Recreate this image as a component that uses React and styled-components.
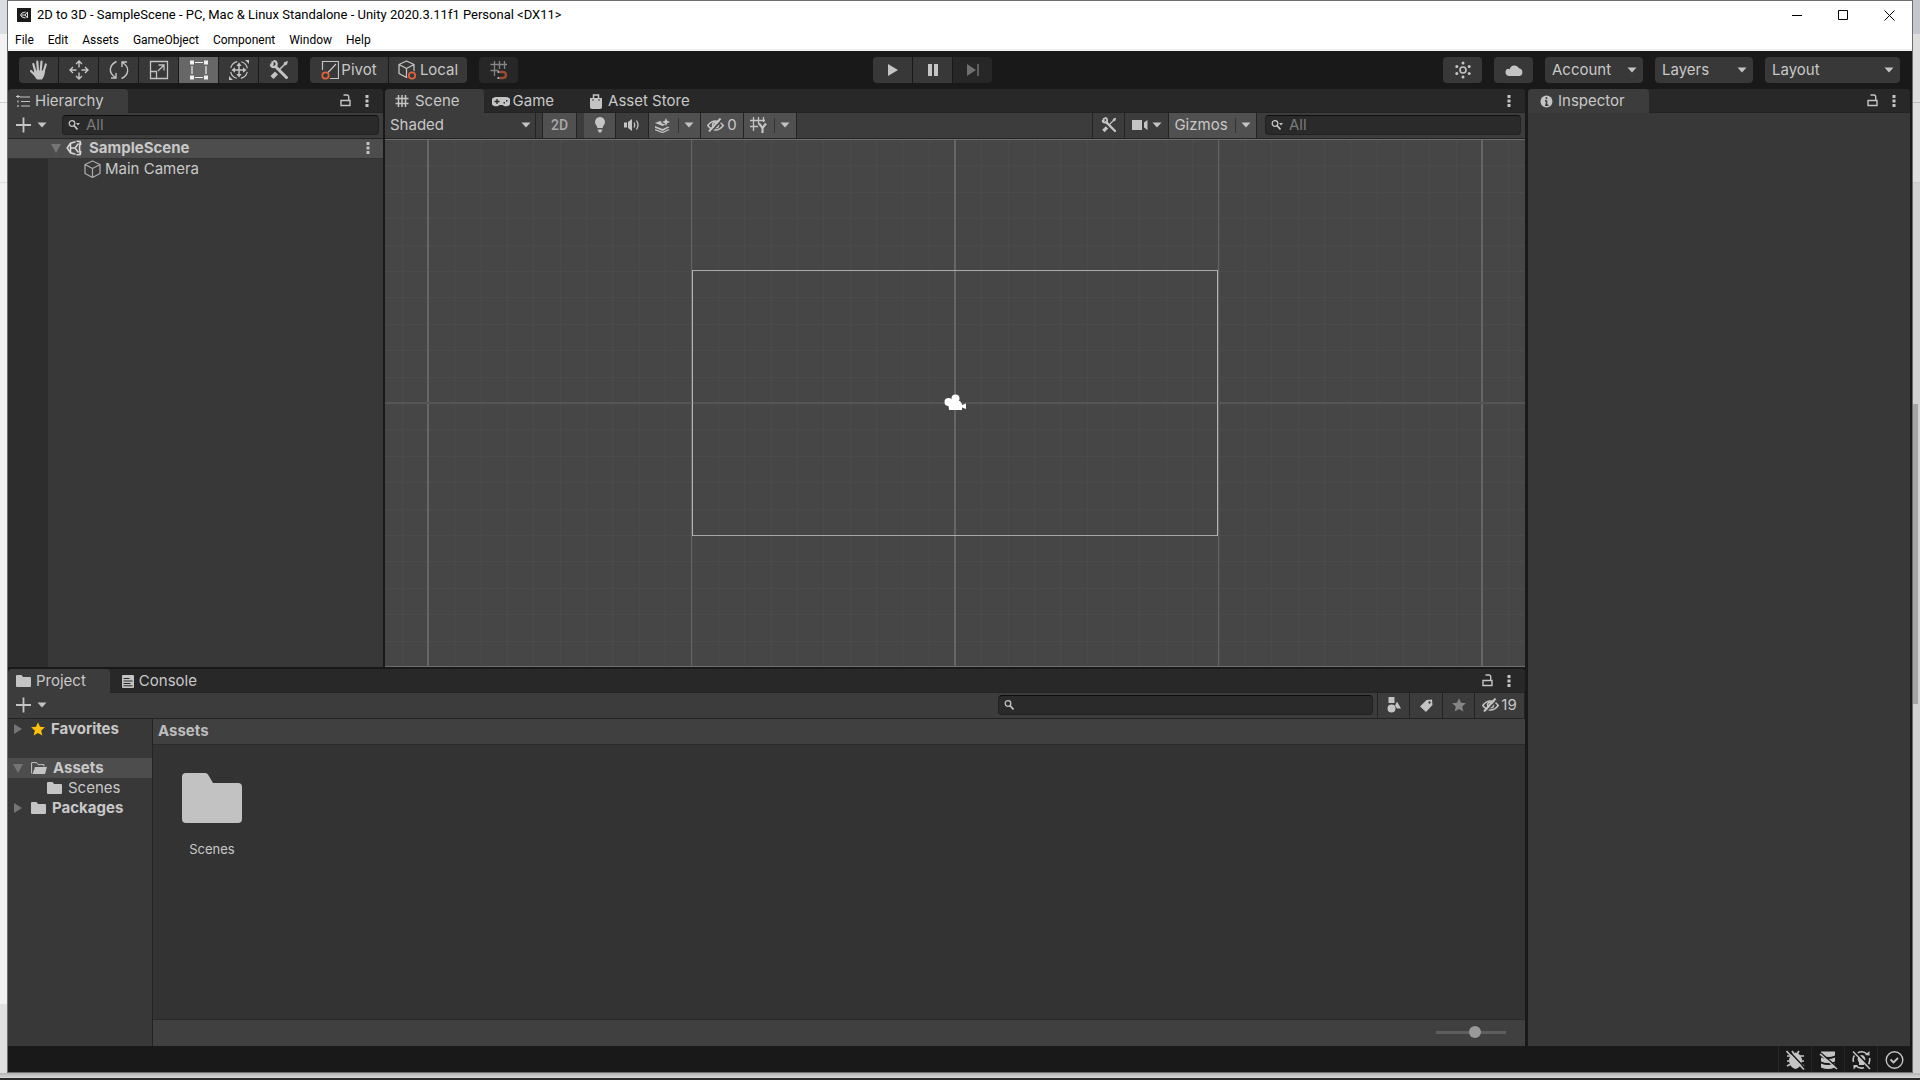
import React from "react";
import styled, { createGlobalStyle, css } from "styled-components";

const GlobalStyle = createGlobalStyle`
  * {
    box-sizing: border-box;
  }
  body {
    margin: 0;
    overflow: hidden;
    background: #e4e4e4;
  }
  button, input, select {
    font: inherit;
    color: inherit;
    margin: 0;
    padding: 0;
    border: none;
    outline: none;
    background: none;
  }
  ul {
    margin: 0;
    padding: 0;
    list-style: none;
  }
  svg {
    display: block;
    flex: none;
  }
`;

/* ---------- window ---------- */

const Desktop = styled.div`
  height: 100vh;
  display: grid;
  grid-template-columns: 7px minmax(0, 1fr) 7px;
  grid-template-rows: minmax(0, 1fr) 5px 2px;
  background: #e2e2e2;
  font-family: Inter, "Noto Sans CJK KR", sans-serif;
  font-size: 15px;
  line-height: 20px;
  color: #c8c8c8;
`;

const LeftEdge = styled.div`
  background: linear-gradient(#d9dee2 34px, #f2f2f2 34px, #f2f2f2 102px, #cfcfcf 102px, #cfcfcf 103px, #f2f2f2 103px, #f2f2f2 182px, #dcdcdc 182px, #dcdcdc 183px, #f2f2f2 183px, #f2f2f2 1004px, #e0e0e0 1004px);
`;

const RightEdge = styled.div`
  padding-top: 404px;
  background: linear-gradient(#c4c8ce 34px, #dedede 34px, #dedede 102px, #bdbdbd 102px, #bdbdbd 103px, #dedede 103px, #dedede 182px, #c8c8c8 182px, #d2d2d2 184px);
`;

const PageThumb = styled.div`
  width: 5px;
  height: 300px;
  background: #a3a3a3;
`;

const UnderShadow = styled.div`
  grid-column: 1 / -1;
  background: linear-gradient(#b4b4b4, #d8d8d8);
`;

const Taskbar = styled.div`
  grid-column: 1 / -1;
  background: #2c2c2c;
`;

const Window = styled.main`
  display: flex;
  flex-direction: column;
  min-width: 0;
  border: 1px solid #6e6e70;
  background: #191919;
`;

const TitleBar = styled.header`
  flex: none;
  display: flex;
  align-items: center;
  height: 29px;
  padding: 0 0 1px 9px;
  background: #fff;
  color: #000;
  font-family: Roboto, "Noto Sans CJK KR", sans-serif;
`;

const Title = styled.h1`
  flex: 1;
  margin: 0 0 0 6px;
  font-size: 13px;
  font-weight: 400;
`;

const CaptionButton = styled.button`
  display: flex;
  align-items: center;
  justify-content: center;
  width: 46px;
  height: 28px;
`;

const MenuBar = styled.nav`
  flex: none;
  display: flex;
  gap: 14px;
  height: 21px;
  padding-left: 7px;
  border-bottom: 2px solid #f0f0f0;
  background: #fff;
  color: #000;
  font-family: Roboto, "Noto Sans CJK KR", sans-serif;
  font-size: 12px;
`;

/* ---------- main toolbar ---------- */

const Toolbar = styled.div`
  flex: none;
  display: grid;
  grid-template-columns: 1fr auto 1fr;
  align-items: center;
  height: 38px;
  padding: 0 12px 0 11px;
`;

const ToolSide = styled.div`
  display: flex;
  gap: 12px;
  justify-content: ${(p) => (p.$end ? "flex-end" : "flex-start")};
`;

const ButtonGroup = styled.div`
  display: flex;
  gap: 1px;
  border-radius: 4px;
  overflow: hidden;
`;

/* the play controls sit a little left of the window centre */
const PlayGroup = styled(ButtonGroup)`
  margin-right: 54px;
`;

const ToolButton = styled.button`
  display: flex;
  align-items: center;
  justify-content: center;
  gap: 2px;
  width: ${(p) => (p.$wide ? "78px" : "39px")};
  height: 26px;
  background: ${(p) => (p.$active ? "#676767" : p.$dim ? "#272727" : "#383838")};
`;

/* select and its arrow share one grid cell */
const SelectBox = styled.label`
  display: grid;
  align-items: center;
  width: ${(p) => p.$width};
  height: ${(p) => (p.$flat ? "24px" : "26px")};
  border-radius: ${(p) => (p.$flat ? "0" : "4px")};
  background: ${(p) => (p.$flat ? "none" : "#383838")};

  select {
    grid-area: 1 / 1;
    width: 100%;
    height: 100%;
    padding-left: ${(p) => (p.$flat ? "5px" : "7px")};
    appearance: none;
  }
  svg {
    grid-area: 1 / 1;
    justify-self: end;
    margin-right: ${(p) => (p.$flat ? "4px" : "6px")};
    pointer-events: none;
  }
`;

/* ---------- panels ---------- */

const Workspace = styled.div`
  flex: 1;
  min-height: 0;
  display: grid;
  grid-template-columns: minmax(0, 1fr) 382px;
  gap: 3px;
  padding-right: 2px;
`;

const MainColumn = styled.div`
  display: grid;
  grid-template-rows: minmax(0, 1fr) 377px;
  gap: 2px;
`;

const TopRow = styled.div`
  display: grid;
  grid-template-columns: 375px minmax(0, 1fr);
  gap: 2px;
  min-height: 0;
`;

const Panel = styled.section`
  display: flex;
  flex-direction: column;
  min-width: 0;
  min-height: 0;
  border-radius: 4px 4px 0 0;
  background: #383838;
  overflow: hidden;
`;

const TabBar = styled.div`
  flex: none;
  display: flex;
  height: 24px;
  border-bottom: 1px solid #232323;
  background: #282828;
`;

const Tab = styled.button`
  display: flex;
  align-items: center;
  gap: ${(p) => p.$gap || "5px"};
  height: 24px;
  padding: 0 ${(p) => p.$end || "24px"} 0 ${(p) => p.$start || "8px"};
  border-radius: 4px 4px 0 0;
  ${(p) =>
    p.$active &&
    css`
      background: #3c3c3c;
    `}
`;

const PanelActions = styled.div`
  display: flex;
  align-items: center;
  gap: 14px;
  margin-left: auto;
  padding-right: 14px;
`;

const IconButton = styled.button`
  display: flex;
  align-items: center;
  justify-content: center;
`;

const PanelToolbar = styled.div`
  flex: none;
  display: flex;
  align-items: flex-start;
  height: 26px;
  border-bottom: 1px solid #232323;
  background: #3c3c3c;
`;

const AddButton = styled.button`
  display: flex;
  align-items: center;
  gap: 6px;
  height: 24px;
  padding-left: 8px;
`;

const Spacer = styled.div`
  flex: 1;
`;

const SearchBox = styled.label`
  display: flex;
  align-items: center;
  gap: 6px;
  flex: ${(p) => (p.$width ? "none" : "1")};
  width: ${(p) => p.$width || "auto"};
  height: 20px;
  margin: 2px 4px 0 ${(p) => p.$before || "8px"};
  padding-left: 5px;
  border: 1px solid #212121;
  border-top-color: #0d0d0d;
  border-radius: 4px;
  background: #2a2a2a;

  input {
    flex: 1;
    min-width: 0;
    height: 18px;
  }
  input::placeholder {
    color: #7b7b7b;
    opacity: 1;
  }
`;

const StripButton = styled.button`
  display: flex;
  align-items: center;
  justify-content: center;
  gap: ${(p) => p.$gap || "4px"};
  width: ${(p) => p.$width || "33px"};
  height: 25px;
  padding-bottom: 1px;
  border-left: ${(p) => (p.$start ? "1px solid #232323" : "none")};
  border-right: 1px solid #232323;
  background: ${(p) => (p.$on ? "#505050" : "none")};
`;

const StripGap = styled.div`
  width: 7px;
`;

const Bar = styled.span`
  width: 1px;
  height: 15px;
  margin: 0 1px 0 3px;
  background: #333;
`;

const ModeLabel = styled.span`
  font-family: Roboto, sans-serif;
  font-size: 14px;
  font-weight: 500;
  color: #a8a8a8;
`;

/* ---------- hierarchy ---------- */

const HierarchyBody = styled.div`
  flex: 1;
  display: flex;
  flex-direction: column;
`;

const SceneRow = styled.div`
  display: flex;
  align-items: center;
  height: 20px;
  padding: 0 13px 1px 43px;
  border-bottom: 1px solid #333;
  background: #4d4d4d;
  font-weight: 700;

  span {
    flex: 1;
    margin-left: 7px;
  }
`;

const ObjectList = styled.ul`
  flex: 1;
  border-left: 40px solid #2d2d2d;
`;

const ObjectRow = styled.li`
  display: flex;
  align-items: center;
  gap: 4px;
  height: 20px;
  padding-left: 36px;
`;

/* ---------- scene ---------- */

const SceneView = styled.div`
  flex: 1;
  min-height: 0;
  background: #464646;

  svg {
    width: 100%;
    height: 100%;
  }
`;

/* ---------- project ---------- */

const ProjectBody = styled.div`
  flex: 1;
  display: flex;
  min-height: 0;
`;

const Tree = styled.ul`
  width: 145px;
  border-right: 1px solid #232323;
`;

const TreeRow = styled.li`
  display: flex;
  align-items: center;
  height: 20px;
  margin-bottom: ${(p) => (p.$last ? "19px" : "0")};
  padding-left: ${(p) => (p.$child ? "39px" : "5px")};
  background: ${(p) => (p.$selected ? "#4d4d4d" : "none")};
  font-weight: ${(p) => (p.$child ? "400" : "700")};

  svg:nth-of-type(2) {
    margin-left: 8px;
  }
  span {
    margin-left: 6px;
  }
`;

const Browser = styled.div`
  flex: 1;
  display: flex;
  flex-direction: column;
  background: #333;
`;

const Breadcrumb = styled.div`
  height: 26px;
  padding: 2px 5px;
  border-bottom: 1px solid #2a2a2a;
  background: #404040;
  color: #bdbdbd;
  font-weight: 700;
`;

const AssetGrid = styled.div`
  flex: 1;
  display: flex;
  align-items: flex-start;
  padding: 28px 24px;
`;

const Asset = styled.button`
  display: flex;
  flex-direction: column;
  align-items: center;
  gap: 16px;
  width: 70px;
  font-size: 13px;
`;

const BrowserFooter = styled.div`
  display: flex;
  align-items: center;
  justify-content: flex-end;
  height: 27px;
  padding: 0 19px 2px 0;
  border-top: 1px solid #2a2a2a;
  background: #404040;
`;

const SizeSlider = styled.input`
  width: 70px;
  height: 14px;
  appearance: none;

  &::-webkit-slider-runnable-track {
    height: 3px;
    background: #5e5e5e;
  }
  &::-webkit-slider-thumb {
    appearance: none;
    width: 12px;
    height: 12px;
    margin-top: -5px;
    border-radius: 50%;
    background: #999;
  }
`;

/* ---------- status bar ---------- */

const StatusBar = styled.footer`
  flex: none;
  display: flex;
  justify-content: flex-end;
  height: 26px;
  padding-right: 2px;
`;

const StatusButton = styled.button`
  display: flex;
  align-items: center;
  justify-content: center;
  width: 33px;
  height: 26px;
  padding-top: 2px;
  border-left: 1px solid #262626;
`;

/* ---------- icons ---------- */

const INK = "#c4c4c4";

const Icon = ({ w = 20, h = 20, color = INK, line = 1, children }) => (
  <svg
    width={w}
    height={h}
    viewBox={`0 0 ${w} ${h}`}
    fill="none"
    stroke={color}
    strokeWidth={line}
    aria-hidden="true"
  >
    {children}
  </svg>
);

const Caret = () => (
  <Icon w={10} h={6}>
    <path d="M0.5 0.5h9L5 5.5z" fill={INK} stroke="none" />
  </Icon>
);

const Fold = ({ open }) => (
  <Icon w={10} h={10}>
    <path d={open ? "M0 1h10L5 10z" : "M1 0v10l8-5z"} fill="#757575" stroke="none" />
  </Icon>
);

const Dots = () => (
  <Icon w={4} h={14}>
    <path d="M.5 1h3v3h-3zM.5 5.500h3v3h-3zM.5 10h3v3h-3z" fill={INK} stroke="none" />
  </Icon>
);

const Lock = () => (
  <Icon w={11} h={13} line={1.4}>
    <path d="M1 6.500h9v5H1zM8.700 6V2.800Q8.700 1 7 1H3.500" />
  </Icon>
);

const Plus = () => (
  <Icon w={15} h={16} line={1.8}>
    <path d="M7.500 0.500v15M0 8h15" />
  </Icon>
);

const Search = ({ menu }) => (
  <Icon w={12} h={12} line={1.3}>
    <circle cx="4" cy="4.500" r="2.800" />
    <path d="M6 6.500L9.500 10.500" strokeWidth="1.800" />
    {menu && <path d="M8 4h4l-2 2.500z" fill={INK} stroke="none" />}
  </Icon>
);

const UnityMark = ({ size = 16 }) => (
  <svg width={size} height={size} viewBox="0 0 16 16" fill="none" stroke="#d8d8d8" strokeWidth="1.600" aria-hidden="true">
    <path d="M9.500 1.800L4.500 3.200 1.200 8l3.300 4.800 5 1.400M10.500 1.200l3.700.3.6 3.500M10.500 14.800l3.700-.3.6-3.500M14.200 1.500L13.500 8l.7 6.500" />
    <path d="M4.500 8H9M9 8l3.500-4.500M9 8l3.500 4.500M4.500 3.200V8v4.800" />
  </svg>
);

const AppIcon = () => (
  <svg width="14" height="14" viewBox="0 0 14 14" aria-hidden="true">
    <rect width="14" height="14" fill="#1b1b1b" />
    <path d="M8.500 4L5 5 3.500 7 5 9l3.500 1M10.500 4v6M4 7h4M8 7l2.500-3M8 7l2.500 3" stroke="#e4e4e4" fill="none" />
  </svg>
);

const Hand = () => (
  <Icon>
    <path d="M5 10.500h11c0 4-1.500 7-3 9H8c-2-2-3-4-3-9z" fill={INK} stroke="none" />
    <path d="M6.500 12L4.300 4M9 11L8.300 1.700M11.700 11l.8-9.300M14.500 12l2.300-7.500M7 16l-5-5" strokeWidth="2.200" strokeLinecap="round" />
  </Icon>
);

const Move = () => (
  <Icon line={1.4}>
    <path d="M10 1.500v6M10 12.500v6M1.500 10h6M12.500 10h6M7 4l3-3 3 3M7 16l3 3 3-3M4 7l-3 3 3 3M16 7l3 3-3 3" />
  </Icon>
);

const Rotate = () => (
  <Icon line={1.4}>
    <path d="M7.500 1.500C0 5-1 13 6.500 17.500M12.500 18.500C20 15 21 7 13.500 2.500M2 18h5v-5M18 2h-5v5" />
  </Icon>
);

const Scale = () => (
  <Icon line={1.3}>
    <path d="M1.500 1.500h17v17h-17zM1.500 11.500h6v7M9 11l5.500-5.500M9.500 5h5.500v5.500" />
  </Icon>
);

const RectTool = () => (
  <Icon color="#f0f0f0" line={1.2}>
    <path d="M6 2.500h8M6 17.500h8M3 6v8M17 6v8" />
    <path d="M1 .5h4v4H1zM15 .5h4v4h-4zM1 15.500h4v4H1zM15 15.500h4v4h-4z" fill="#f0f0f0" stroke="none" />
  </Icon>
);

const Transform = () => (
  <Icon line={1.2}>
    <circle cx="10" cy="10" r="8.500" strokeDasharray="9.350 4" strokeDashoffset="-2" />
    <path d="M10 4v12M4 10h12" strokeWidth="1.500" />
    <path d="M10 2.500l2.700 3.500H7.300zM10 17.500l2.700-3.500H7.300zM2.500 10L6 7.300v5.400zM17.500 10L14 7.300v5.400zM16 0h4v4zM0 16v4h4z" fill={INK} stroke="none" />
  </Icon>
);

const Tools = ({ size = 20 }) => (
  <svg width={size} height={size} viewBox="0 0 20 20" fill="none" stroke={INK} aria-hidden="true">
    <path d="M6.500 6.500l11 11" strokeWidth="3" strokeLinecap="round" />
    <path d="M3.500 1.200v3.300H1.200M1.700 4.500c1 4 6.300 3 6-1C7.500 2 6.500 1 4.500 1" strokeWidth="2.200" />
    <path d="M10.500 9.500l6-6" strokeWidth="1.600" />
    <path d="M19 1l-1 3.500-2 1-1.500-1.500 1-2z" fill={INK} stroke="none" />
    <path d="M3 17.500l4.500-4.500" strokeWidth="4.200" />
  </svg>
);

const Pivot = () => (
  <Icon w={18}>
    <path d="M1.500 10V1.500h16v17H9M7 12.500L15 4" strokeWidth="1.200" />
    <circle cx="4.500" cy="15.500" r="3.200" stroke="#e2623c" strokeWidth="1.700" />
  </Icon>
);

const CubeShape = ({ color = INK }) => (
  <path d="M8.500 1L16 4.500v9L8.500 17.500 1 13.500v-9zM1 4.500l7.500 4 7.500-4M8.500 8.500v9" stroke={color} strokeWidth="1.300" strokeLinejoin="round" />
);

const Local = () => (
  <Icon w={20}>
    <CubeShape />
    <circle cx="14" cy="15.500" r="5" fill="#383838" stroke="none" />
    <circle cx="14" cy="15.500" r="3.200" stroke="#e2623c" strokeWidth="1.700" />
  </Icon>
);

const Cube = () => (
  <Icon w={17} h={18}>
    <CubeShape color="#a8a8a8" />
  </Icon>
);

const Snap = () => (
  <Icon color="#858585">
    <path d="M5.500 1v15M10.500 1v8M15.500 1v8M1.500 4.500H18M1.500 10.500h8" strokeWidth="1.300" />
    <path d="M8.500 11h2v2h-2zM8.500 17h2v2h-2z" fill="#b0b0b0" stroke="none" />
    <path d="M11 12h3q3 .3 3 3t-3 3h-3" stroke="#9c4a31" strokeWidth="2.400" />
  </Icon>
);

const Play = () => (
  <Icon w={12} h={14}>
    <path d="M1 1l10 6-10 6z" fill={INK} stroke="none" />
  </Icon>
);

const Pause = () => (
  <Icon w={12} h={14}>
    <path d="M1 1h4v12H1zM7 1h4v12H7z" fill={INK} stroke="none" />
  </Icon>
);

const Step = () => (
  <Icon w={14} h={14} color="#707070">
    <path d="M1 1l9 6-9 6z" fill="#707070" stroke="none" />
    <path d="M12 1v12" strokeWidth="1.500" />
  </Icon>
);

const Services = () => (
  <Icon w={18} h={18}>
    <circle cx="9" cy="9" r="3" strokeWidth="1.600" />
    <g fill={INK} stroke="none">
      <circle cx="9" cy="2" r="1.500" />
      <circle cx="9" cy="16" r="1.500" />
      <circle cx="2.800" cy="5.500" r="1.500" />
      <circle cx="15.200" cy="5.500" r="1.500" />
      <circle cx="2.800" cy="12.500" r="1.500" />
      <circle cx="15.200" cy="12.500" r="1.500" />
    </g>
  </Icon>
);

const Cloud = () => (
  <Icon w={18} h={14}>
    <path d="M4 13a3.700 3.700 0 0 1-1-7.200 5 5 0 0 1 1.700.4A5 5 0 0 1 14 5.200 4 4 0 0 1 14.500 13z" fill={INK} stroke="none" />
  </Icon>
);

const ListIcon = () => (
  <Icon w={14} h={12} line={1.2}>
    <path d="M4 2h10M5 6.500h9M5 11h9M2 0v3M0 1.500h4M2 5.500v2M2 10v2" />
  </Icon>
);

const Hash = () => (
  <Icon w={14} h={14} line={1.5}>
    <path d="M3.500 1v12M10.500 1v12M7 1v12M.5 4.500h13M.5 9.500h13" />
  </Icon>
);

const Gamepad = () => (
  <Icon w={18} h={11}>
    <path d="M5 1h8a5 4.700 0 1 1-2.500 8h-3A5 4.700 0 1 1 5 1z" fill={INK} stroke="none" />
    <path d="M5 3v5M2.500 5.500h5" stroke="#282828" strokeWidth="1.300" />
    <path d="M11.500 6h1.500v1.500h-1.500zM14 4h1.500v1.500H14z" fill="#282828" stroke="none" />
  </Icon>
);

const Bag = () => (
  <Icon w={12} h={15}>
    <path d="M0 4h12v9q0 2-2 2H2q-2 0-2-2z" fill={INK} stroke="none" />
    <path d="M3.500 4V1h5v3" strokeWidth="1.500" />
    <path d="M2 6h2M8 6h2" stroke="#444" />
  </Icon>
);

const Info = () => (
  <Icon w={13} h={13}>
    <circle cx="6.500" cy="6.500" r="6" fill={INK} stroke="none" />
    <path d="M6.500 2.200v2M6.500 5.500v5M5 5.800h1.500M5 10.200h3.500" stroke="#3c3c3c" strokeWidth="1.600" />
  </Icon>
);

const Bulb = () => (
  <Icon w={12} h={16}>
    <path d="M6 0a5 5 0 0 1 3.500 8.500L8.500 11h-5l-1-2.500A5 5 0 0 1 6 0zM3.500 12.500h5L7 15.500H5z" fill={INK} stroke="none" />
  </Icon>
);

const Speaker = () => (
  <Icon w={16} h={12}>
    <path d="M0 3.500h3v5H0zM4 3l4-3v12L4 9z" fill={INK} stroke="none" />
    <path d="M10 3.500q1.500 2.500 0 5M12.500 1.500q3 4.500 0 9" strokeWidth="1.300" />
  </Icon>
);

const Effects = () => (
  <Icon w={16} h={15}>
    <path d="M0 5l5.500-2.300L7 5.500l3.500 1-3 1.500zM0 8l7.500 3L13 8.500l1.500.7L7.500 13 0 9.700z" fill={INK} stroke="none" />
    <path d="M0 11.500L7.500 14.500l6.500-3" strokeWidth="1.300" />
    <path d="M11 0l1.200 2.800L15 4l-2.800 1.200L11 8 9.800 5.200 7 4l2.800-1.200z" fill={INK} stroke="none" />
  </Icon>
);

const Hidden = () => (
  <Icon w={17} h={14} line={1.5}>
    <path d="M.8 7.500Q4 3 8.500 3t7.700 4.500Q13 12 8.500 12T.8 7.500z" />
    <path d="M5.500 7a3 2.800 0 0 1 6 0 3 2.800 0 0 1-6 0z" />
    <path d="M4 14L15 2" stroke="#444" strokeWidth="1.500" />
    <path d="M2 13.500L13.500 .5" strokeWidth="2" />
  </Icon>
);

const GridAxis = () => (
  <Icon w={17} h={16} line={1.3}>
    <path d="M3.500 0v14M8.500 0v7M13.500 0v5M0 3.500h15M0 9.500h8" />
    <path d="M9 6.500l3.500 4.500L16 6.500M12.500 10.500V16" strokeWidth="2.200" />
  </Icon>
);

const SceneCam = () => (
  <Icon w={16} h={12}>
    <path d="M0 1h10v10H0zM12 3.500L15.500 1v10L12 8.500z" fill={INK} stroke="none" />
  </Icon>
);

const FolderIcon = () => (
  <Icon w={15} h={12}>
    <path d="M0 1q0-1 1-1h4.500l1.500 2h7q1 0 1 1v8q0 1-1 1H1q-1 0-1-1z" fill={INK} stroke="none" />
  </Icon>
);

const OpenFolder = () => (
  <Icon w={16} h={12}>
    <path d="M.6 11.500V.6h5l1.500 2H13V4.500" />
    <path d="M1.500 12L4 5h12l-2 7z" fill={INK} stroke="none" />
  </Icon>
);

const BigFolder = () => (
  <Icon w={60} h={50}>
    <path d="M0 4q0-4 4-4h19.500q1.500 0 2.500 1.500L31 10h25q4 0 4 4v32q0 4-4 4H4q-4 0-4-4z" fill="#c2c2c2" stroke="none" />
  </Icon>
);

const ConsoleIcon = () => (
  <Icon w={12} h={13}>
    <rect width="12" height="13" rx="1" fill={INK} stroke="none" />
    <path d="M1.500 3.500h6M1.500 6h9M1.500 8.500h7M1.500 10.800h9" stroke="#282828" />
  </Icon>
);

const Star = ({ color }) => (
  <Icon w={14} h={14}>
    <path d="M7 .3l2 4.500 4.900.5-3.700 3.200 1.100 4.900L7 10.900l-4.300 2.500 1.100-4.900L.1 5.300 5 4.800z" fill={color} stroke="none" />
  </Icon>
);

const Shapes = () => (
  <Icon w={14} h={16}>
    <path d="M1.500 0h6v6h-6zM10 4.500L14 11.500h-4L8 8.500z" fill={INK} stroke="none" />
    <circle cx="4.500" cy="11.500" r="4" fill={INK} stroke="none" />
  </Icon>
);

const Tag = () => (
  <Icon w={13} h={13}>
    <path d="M6.500 1L12 .5l.5 5.500-6.500 7L0 7.500zM9.500 2.300a1.200 1.200 0 1 0 .1 0z" fill={INK} fillRule="evenodd" stroke="none" />
  </Icon>
);

const BugOff = () => (
  <Icon w={19}>
    <path d="M5 5Q9.500 0 14 5l2 4q0 8-6.500 10Q3 17 3 9z" fill={INK} stroke="none" />
    <path d="M1 6h4M1 11h17M1 16l4-2M18 6h-4M18 16l-4-2M6 1l2 3M13 1l-2 3" strokeWidth="1.700" />
    <path d="M2 0l17 18" stroke="#191919" strokeWidth="1.500" />
    <path d="M.5 1L18 19.500" strokeWidth="1.600" />
  </Icon>
);

const CacheOff = () => (
  <Icon w={19}>
    <path d="M2 1.500h14v4Q9 8.500 2 5.500zM2 7.500q7 3 14 0v4q-7 3-14 0zM2 13.500q7 3 14 0v4Q9 20.500 2 17.500z" fill={INK} stroke="none" />
    <path d="M2 3l17 15" stroke="#191919" strokeWidth="1.500" />
    <path d="M1 4l17 15" strokeWidth="1.600" />
  </Icon>
);

const LightOff = () => (
  <Icon w={19}>
    <path d="M9.500 5a4.300 4.300 0 0 1 2.500 7.500V15H7v-2.500A4.300 4.300 0 0 1 9.500 5z" fill={INK} stroke="none" />
    <path d="M5.500 3Q11 0 15 4M17.500 8q1 5-2.500 8M12 17.800q-5 1.200-8.500-2.300M1.500 12Q.5 8 2.500 5.500" strokeWidth="1.600" />
    <path d="M13 5l4.500.5V1zM6 15H1.500v4.500z" fill={INK} stroke="none" />
    <path d="M2.500 1L19 18" stroke="#191919" strokeWidth="1.800" />
    <path d="M1 1.500L18 19" strokeWidth="1.500" />
  </Icon>
);

const CheckRing = () => (
  <Icon w={19} line={1.4}>
    <circle cx="9.500" cy="10" r="8.300" />
    <path d="M5.500 9.500l3 3 4.500-4.500" strokeWidth="1.800" />
  </Icon>
);

/* ---------- data ---------- */

const menus = ["File", "Edit", "Assets", "GameObject", "Component", "Window", "Help"];

const tools = [
  { name: "Hand Tool", icon: <Hand /> },
  { name: "Move Tool", icon: <Move /> },
  { name: "Rotate Tool", icon: <Rotate /> },
  { name: "Scale Tool", icon: <Scale /> },
  { name: "Rect Tool", icon: <RectTool />, active: true },
  { name: "Transform Tool", icon: <Transform /> },
  { name: "Custom Tools", icon: <Tools /> },
];

const Dropdown = ({ label, width, flat }) => (
  <SelectBox $width={width} $flat={flat}>
    <select aria-label={label}>
      <option>{label}</option>
    </select>
    <Caret />
  </SelectBox>
);

const SearchField = ({ label, placeholder, menu, width, before }) => (
  <SearchBox $width={width} $before={before}>
    <Search menu={menu} />
    <input type="text" aria-label={label} placeholder={placeholder} />
  </SearchBox>
);

const Actions = ({ lock }) => (
  <PanelActions>
    {lock && (
      <IconButton aria-label="Lock">
        <Lock />
      </IconButton>
    )}
    <IconButton aria-label="More">
      <Dots />
    </IconButton>
  </PanelActions>
);

const steps = (from, to) => Array.from({ length: to - from + 1 }, (_, i) => from + i);

/* world grid centred on the camera */
const SceneGrid = () => (
  <svg viewBox="0 0 1140 528" preserveAspectRatio="xMidYMid slice" role="img" aria-label="Scene view">
    <g stroke="#4b4b4b" strokeWidth="1">
      {steps(-21, 21).map((n) => (
        <path key={`v${n}`} d={`M${Math.round(570 + n * 26.35) + 0.5} 0V528`} />
      ))}
      {steps(-10, 10).map((n) => (
        <path key={`h${n}`} d={`M0 ${Math.round(264 + n * 26.4) + 0.5}H1140`} />
      ))}
    </g>
    <path d="M306.500 0V528M833.500 0V528" stroke="#636363" />
    <path d="M43 0V528M570 0V528M1097 0V528" stroke="#666" strokeWidth="2" />
    <path d="M0 264H1140" stroke="#555" strokeWidth="2" />
    <path d="M0 .5H1140M0 527.500H1140" stroke="#6e6e6e" />
    <path d="M307 131.500H833M307 396.500H833" stroke="#a8a8a8" />
    <path d="M307.500 131V397M832.500 131V397" stroke="#b4b4b4" />
    <g fill="#fff">
      <circle cx="563.500" cy="263" r="4" />
      <circle cx="570.500" cy="259.500" r="4" />
      <path d="M563 262h12l2 3v6h-13zM577 266l4-1.500v5.500l-4-1.500z" />
    </g>
  </svg>
);

const App = () => (
  <>
    <GlobalStyle />
    <Desktop>
      <LeftEdge />
      <Window>
        <TitleBar>
          <AppIcon />
          <Title>2D to 3D - SampleScene - PC, Mac &amp; Linux Standalone - Unity 2020.3.11f1 Personal &lt;DX11&gt;</Title>
          <CaptionButton aria-label="Minimize">
            <Icon w={10} h={10} color="#000"><path d="M0 5.500h10" /></Icon>
          </CaptionButton>
          <CaptionButton aria-label="Maximize">
            <Icon w={10} h={10} color="#000"><path d="M.5 .5h9v9h-9z" /></Icon>
          </CaptionButton>
          <CaptionButton aria-label="Close">
            <Icon w={11} h={11} color="#000"><path d="M.5 .5l10 10M10.500 .5l-10 10" /></Icon>
          </CaptionButton>
        </TitleBar>
        <MenuBar>
          {menus.map((menu) => (
            <button key={menu}>{menu}</button>
          ))}
        </MenuBar>

        <Toolbar>
          <ToolSide>
            <ButtonGroup>
              {tools.map((tool) => (
                <ToolButton key={tool.name} aria-label={tool.name} $active={tool.active}>
                  {tool.icon}
                </ToolButton>
              ))}
            </ButtonGroup>
            <ButtonGroup>
              <ToolButton $wide><Pivot />Pivot</ToolButton>
              <ToolButton $wide><Local />Local</ToolButton>
            </ButtonGroup>
            <ButtonGroup>
              <ToolButton aria-label="Grid Snapping" $dim><Snap /></ToolButton>
            </ButtonGroup>
          </ToolSide>
          <PlayGroup>
            <ToolButton aria-label="Play"><Play /></ToolButton>
            <ToolButton aria-label="Pause"><Pause /></ToolButton>
            <ToolButton aria-label="Step" $dim><Step /></ToolButton>
          </PlayGroup>
          <ToolSide $end>
            <ButtonGroup>
              <ToolButton aria-label="Services"><Services /></ToolButton>
            </ButtonGroup>
            <ButtonGroup>
              <ToolButton aria-label="Cloud"><Cloud /></ToolButton>
            </ButtonGroup>
            <Dropdown label="Account" width="98px" />
            <Dropdown label="Layers" width="98px" />
            <Dropdown label="Layout" width="135px" />
          </ToolSide>
        </Toolbar>

        <Workspace>
          <MainColumn>
            <TopRow>
              <Panel>
                <TabBar>
                  <Tab $active><ListIcon />Hierarchy</Tab>
                  <Actions lock />
                </TabBar>
                <PanelToolbar>
                  <AddButton aria-label="Create"><Plus /><Caret /></AddButton>
                  <SearchField label="Search hierarchy" placeholder="All" menu before="15px" />
                </PanelToolbar>
                <HierarchyBody>
                  <SceneRow>
                    <Fold open />
                    <Icon w={5} h={1} />
                    <UnityMark />
                    <span>SampleScene</span>
                    <Dots />
                  </SceneRow>
                  <ObjectList>
                    <ObjectRow><Cube />Main Camera</ObjectRow>
                  </ObjectList>
                </HierarchyBody>
              </Panel>

              <Panel>
                <TabBar>
                  <Tab $active $start="10px" $gap="6px"><Hash />Scene</Tab>
                  <Tab $gap="3px" $end="26px"><Gamepad />Game</Tab>
                  <Tab $start="10px" $gap="6px"><Bag />Asset Store</Tab>
                  <Actions />
                </TabBar>
                <PanelToolbar>
                  <Dropdown label="Shaded" width="150px" flat />
                  <StripButton as="span" $width="8px" $start />
                  <StripButton $on $width="34px"><ModeLabel>2D</ModeLabel></StripButton>
                  <StripGap />
                  <StripButton $on $width="32px" aria-label="Lighting"><Bulb /></StripButton>
                  <StripButton aria-label="Audio"><Speaker /></StripButton>
                  <StripButton $on $width="52px" aria-label="Effects"><Effects /><Bar /><Caret /></StripButton>
                  <StripButton $on $width="43px" $gap="3px"><Hidden />0</StripButton>
                  <StripButton $on $width="53px" aria-label="Grid"><GridAxis /><Bar /><Caret /></StripButton>
                  <Spacer />
                  <StripButton $start aria-label="Tools"><Tools size={16} /></StripButton>
                  <StripButton $width="44px" aria-label="Scene camera"><SceneCam /><Caret /></StripButton>
                  <StripButton $on $width="88px">Gizmos<Bar /><Caret /></StripButton>
                  <SearchField label="Search scene" placeholder="All" menu width="256px" />
                </PanelToolbar>
                <SceneView>
                  <SceneGrid />
                </SceneView>
              </Panel>
            </TopRow>

            <Panel>
              <TabBar>
                <Tab $active><FolderIcon />Project</Tab>
                <Tab $start="12px"><ConsoleIcon />Console</Tab>
                <Actions lock />
              </TabBar>
              <PanelToolbar>
                <AddButton aria-label="Create"><Plus /><Caret /></AddButton>
                <Spacer />
                <SearchField label="Search project" width="375px" />
                <StripButton $start aria-label="Search by type"><Shapes /></StripButton>
                <StripButton aria-label="Search by label"><Tag /></StripButton>
                <StripButton $width="32px" aria-label="Save search"><Star color="#858585" /></StripButton>
                <StripButton $width="50px" $gap="2px"><Hidden />19</StripButton>
              </PanelToolbar>
              <ProjectBody>
                <Tree>
                  <TreeRow $last><Fold /><Star color="#fec009" /><span>Favorites</span></TreeRow>
                  <TreeRow $selected><Fold open /><OpenFolder /><span>Assets</span></TreeRow>
                  <TreeRow $child><FolderIcon /><span>Scenes</span></TreeRow>
                  <TreeRow><Fold /><FolderIcon /><span>Packages</span></TreeRow>
                </Tree>
                <Browser>
                  <Breadcrumb>Assets</Breadcrumb>
                  <AssetGrid>
                    <Asset><BigFolder />Scenes</Asset>
                  </AssetGrid>
                  <BrowserFooter>
                    <SizeSlider type="range" aria-label="Icon size" min="0" max="100" defaultValue="57" />
                  </BrowserFooter>
                </Browser>
              </ProjectBody>
            </Panel>
          </MainColumn>

          <Panel>
            <TabBar>
              <Tab $active $start="12px"><Info />Inspector</Tab>
              <Actions lock />
            </TabBar>
          </Panel>
        </Workspace>

        <StatusBar>
          <StatusButton aria-label="Debugger"><BugOff /></StatusButton>
          <StatusButton aria-label="Cache server"><CacheOff /></StatusButton>
          <StatusButton aria-label="Auto generate lighting"><LightOff /></StatusButton>
          <StatusButton aria-label="Background tasks"><CheckRing /></StatusButton>
        </StatusBar>
      </Window>
      <RightEdge>
        <PageThumb />
      </RightEdge>
      <UnderShadow />
      <Taskbar />
    </Desktop>
  </>
);

export default App;
